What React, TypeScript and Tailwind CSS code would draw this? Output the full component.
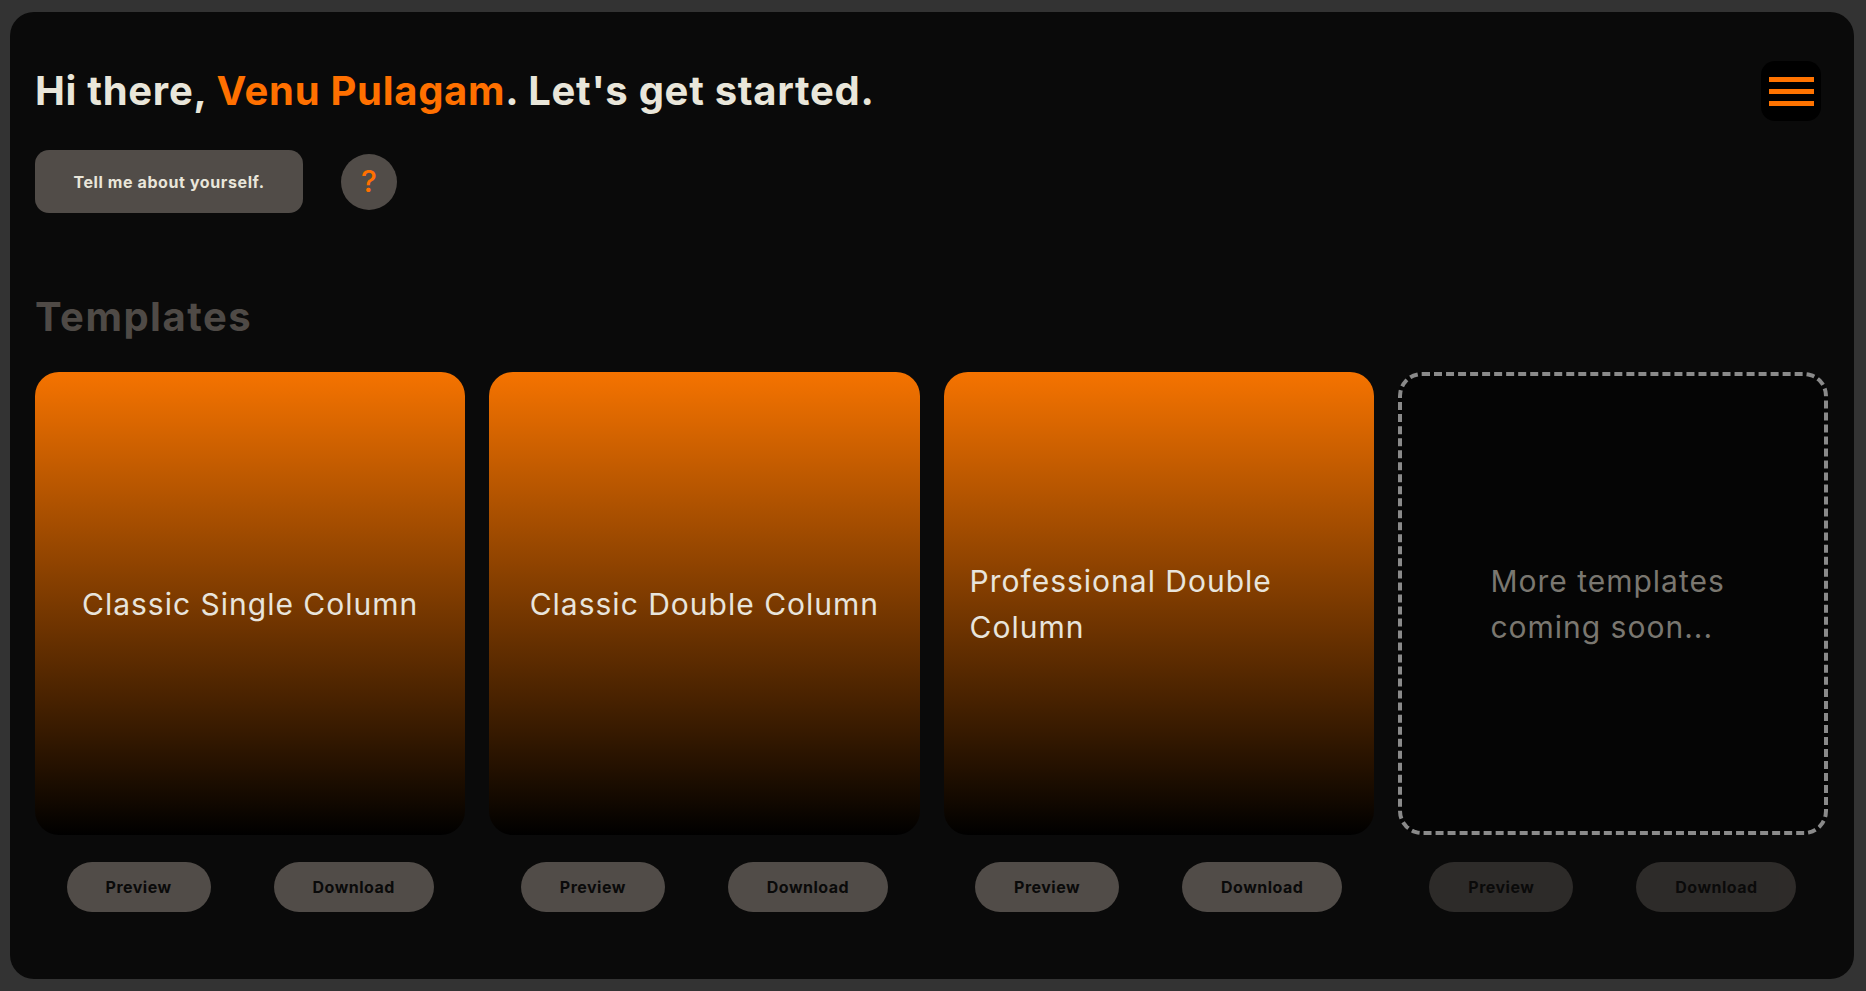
import React from "react";

const templates = [
  { id: 1, name: "Classic Single Column" },
  { id: 2, name: "Classic Double Column" },
  { id: 3, name: "Professional Double Column" },
];

function CardActions({ disabled }: { disabled?: boolean }) {
  return (
    <div
      className={`mt-[27px] flex justify-around ${disabled ? "opacity-50" : ""}`}
    >
      <button className="h-[50px] w-[144px] rounded-full bg-[#514c48] text-[16px] font-bold tracking-[0.5px] text-[#0a0a0a]">
        Preview
      </button>
      <button className="h-[50px] w-[160px] rounded-full bg-[#514c48] text-[16px] font-bold tracking-[0.5px] text-[#0a0a0a]">
        Download
      </button>
    </div>
  );
}

export default function App() {
  return (
    <div
      className="h-[991px] bg-[#333333] pt-[12px] pr-[12px] pb-[12px] pl-[10px]"
      style={{ fontFamily: "Inter, 'Noto Sans', sans-serif" }}
    >
      <div className="flex h-full flex-col rounded-[24px] bg-[#0a0a0a] pt-[49px] pr-[26px] pl-[25px]">
        <div className="flex h-[60px] items-center justify-between">
          <h1 className="text-[40px] font-bold tracking-[0.7px] text-[#e9e6da]">
            Hi there, <span className="text-[#ff7000]">Venu Pulagam</span>.
            Let's get started.
          </h1>
          <button className="mr-[7px] flex h-[60px] w-[60px] flex-col items-center justify-center gap-[7px] rounded-[14px] bg-black">
            <span className="h-[5px] w-[45px] bg-[#ff7300]" />
            <span className="h-[5px] w-[45px] bg-[#ff7300]" />
            <span className="h-[5px] w-[45px] bg-[#ff7300]" />
          </button>
        </div>

        <div className="mt-[29px] flex items-center gap-[38px]">
          <button className="h-[63px] w-[268px] rounded-[14px] bg-[#514c48] text-[16px] font-bold tracking-[0.6px] text-[#e9e6da]">
            Tell me about yourself.
          </button>
          <button className="flex h-[56px] w-[56px] items-center justify-center rounded-full bg-[#514c48] text-[30px] font-medium text-[#ff7000]">
            ?
          </button>
        </div>

        <h2 className="mt-[80px] text-[40px] leading-[48px] font-bold tracking-[1.5px] text-[#4f4a46]">
          Templates
        </h2>

        <div className="mt-[31px] grid grid-cols-4 gap-[24px]">
          {templates.map((t) => (
            <div key={t.id}>
              <div className="flex h-[463px] items-center justify-center rounded-[24px] bg-[linear-gradient(to_bottom,#f57300,#000000)] px-[26px]">
                <p className="text-[30px] leading-[46px] tracking-[1px] text-[#e8e4dc]">
                  {t.name}
                </p>
              </div>
              <CardActions />
            </div>
          ))}
          <div>
            <div className="flex h-[463px] items-center justify-center rounded-[24px] border-[4px] border-dashed border-[#8a8a8a] bg-[#050505]">
              <p className="max-w-[245px] text-[30px] leading-[46px] tracking-[1px] text-[#7a7770]">
                More templates coming soon...
              </p>
            </div>
            <CardActions disabled />
          </div>
        </div>
      </div>
    </div>
  );
}
